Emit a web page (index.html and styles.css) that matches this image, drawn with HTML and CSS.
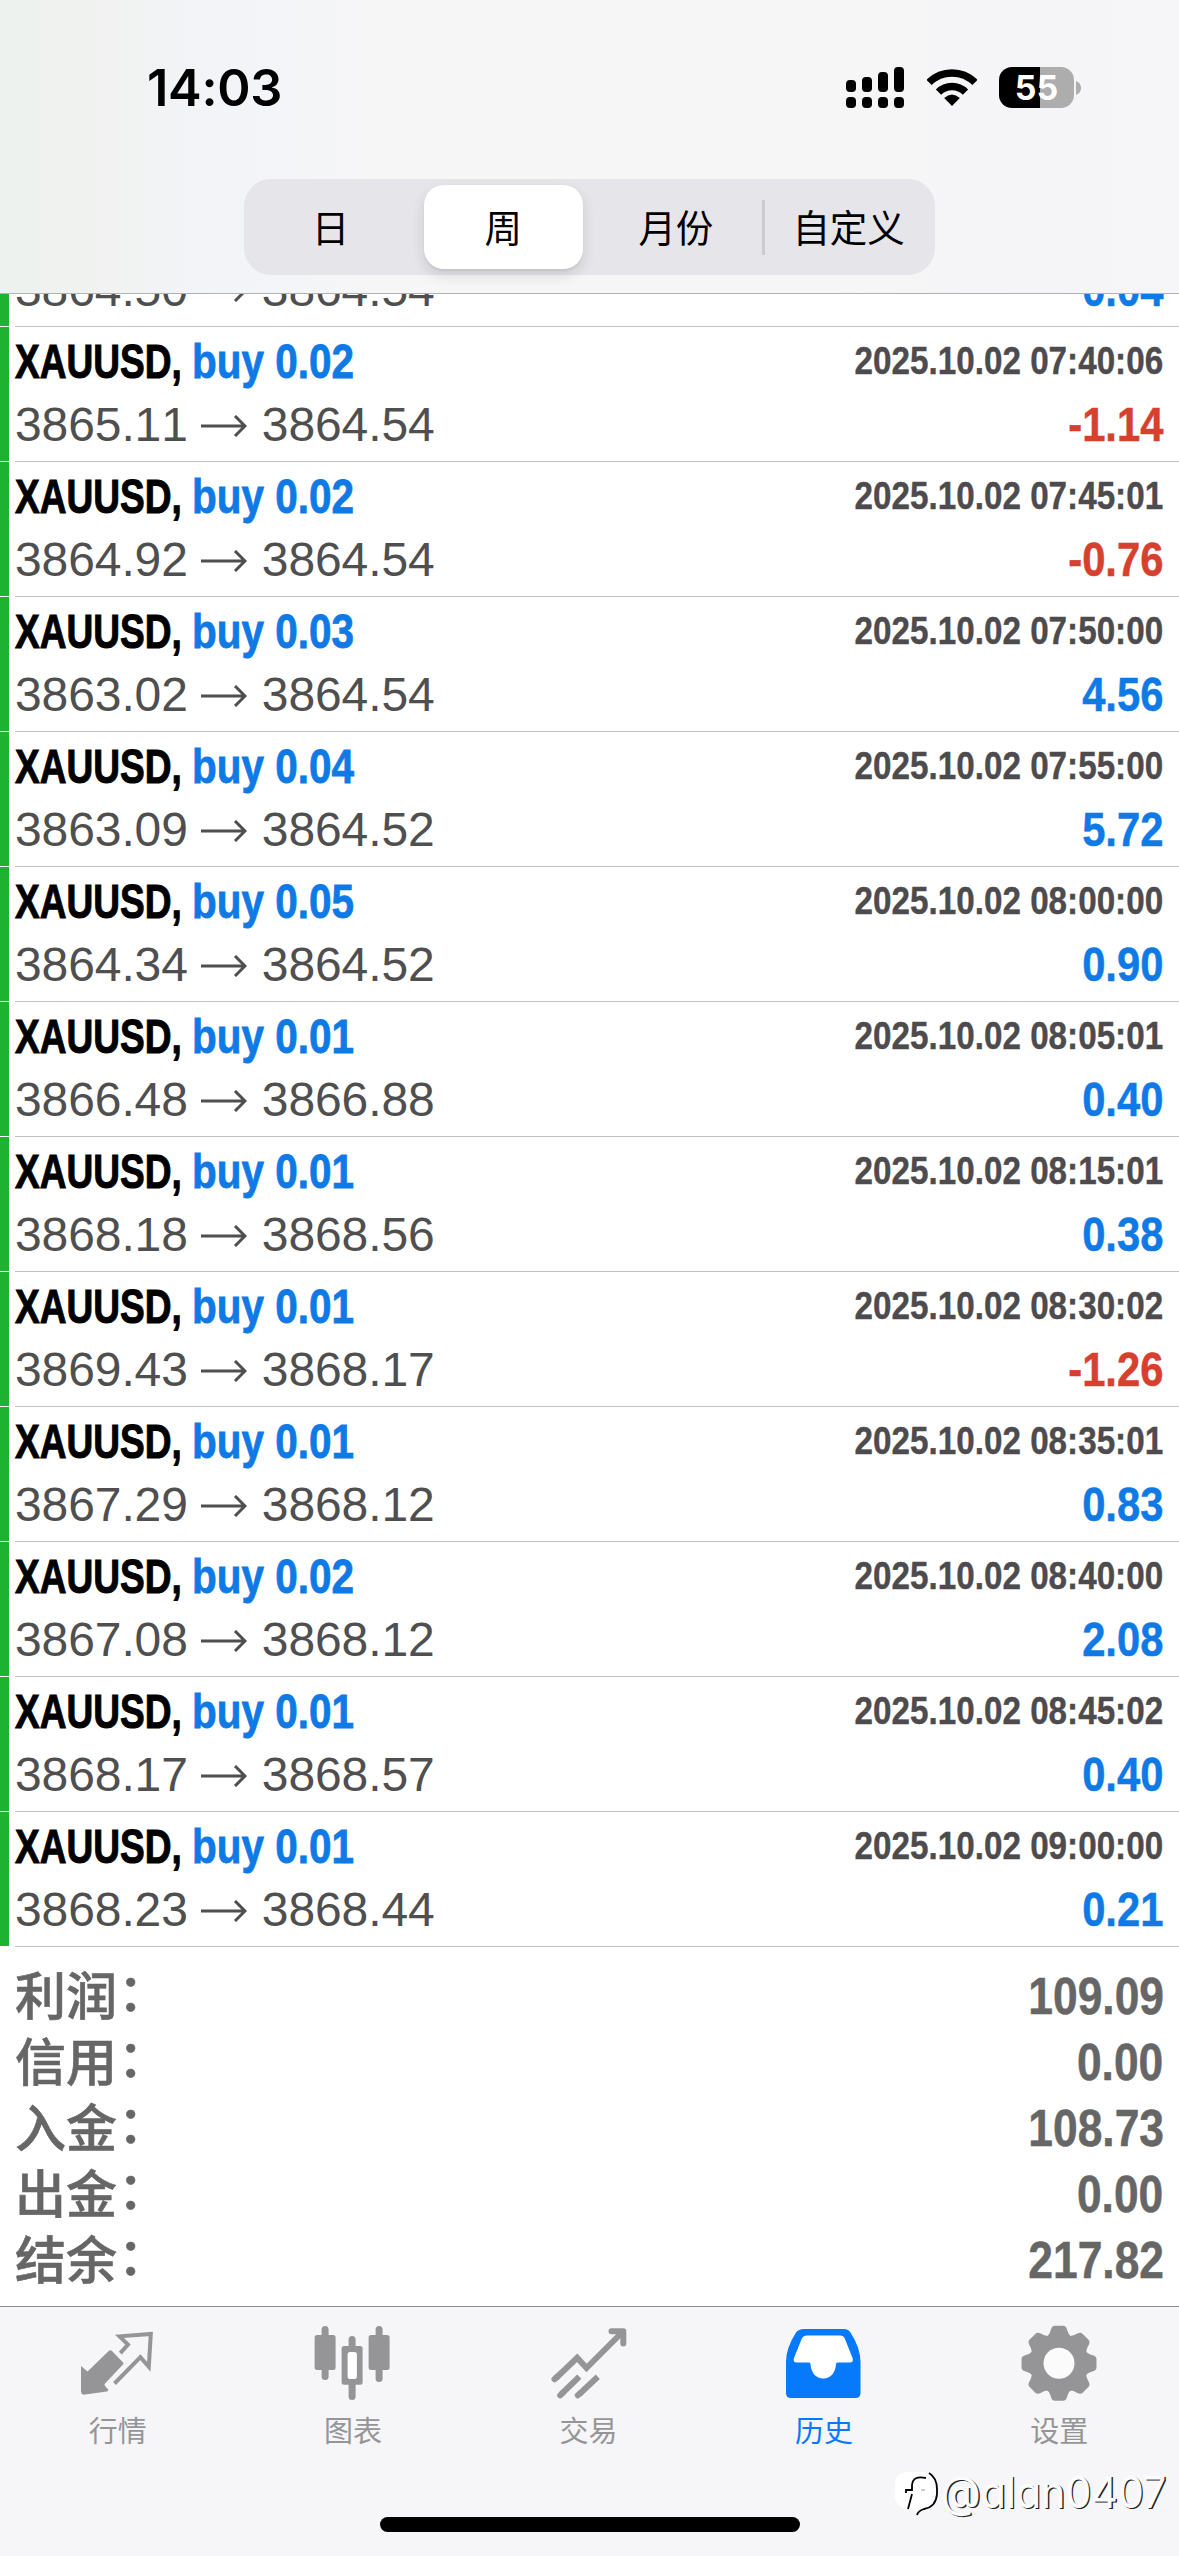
FILE: index.html
```html
<!DOCTYPE html>
<html lang="zh-CN">
<head>
<meta charset="utf-8">
<title>历史</title>
<link rel="stylesheet" href="styles.css">
</head>
<body>
<div class="app">
  <header class="header">
    <div class="status">
      <span class="time">14:03</span>
      <div class="status-icons">
        <svg class="signal" width="58" height="41" viewBox="0 0 58 41">
          <rect x="0" y="13" width="10" height="12" rx="4"/><rect x="16" y="10" width="10" height="15" rx="4"/><rect x="32" y="5" width="10" height="20" rx="4"/><rect x="48" y="0" width="10" height="25" rx="4"/>
          <rect x="0" y="30" width="10" height="11" rx="4"/><rect x="16" y="30" width="10" height="11" rx="4"/><rect x="32" y="30" width="10" height="11" rx="4"/><rect x="48" y="30" width="10" height="11" rx="4"/>
        </svg>
        <svg class="wifi" width="50" height="41" viewBox="0 0 50 41">
          <path d="M2 15.5A32.5 32.5 0 0 1 48 15.5M11.5 25.2A19 19 0 0 1 38.5 25.2" fill="none" stroke="#000" stroke-width="7.4"/>
          <path d="M17.2 31Q25 24 32.8 31L25 39Z"/>
        </svg>
        <div class="battery"><span>55</span></div>
        <svg class="nub" width="5" height="14" viewBox="0 0 5 14"><path d="M0 0Q5 2 5 7T0 14Z" fill="#adadad"/></svg>
      </div>
    </div>
    <nav class="segments">
      <span class="segment">日</span>
      <span class="segment selected">周</span>
      <span class="segment">月份</span>
      <span class="segment divided">自定义</span>
    </nav>
  </header>

  <main class="deals">
    <div class="deal"><i class="mark"></i><div class="body"><div class="line"><b class="symbol">XAUUSD,</b><b class="side">buy 0.01</b><b class="date">2025.10.02 07:35:01</b></div><div class="line"><span class="price">3864.50</span><svg class="arrow" viewBox="0 0 46 22"><path d="M0 11H44M34 1L44 11L34 21"/></svg><span class="price">3864.54</span><b class="profit">0.04</b></div></div></div>
    <div class="deal"><i class="mark"></i><div class="body"><div class="line"><b class="symbol">XAUUSD,</b><b class="side">buy 0.02</b><b class="date">2025.10.02 07:40:06</b></div><div class="line"><span class="price">3865.11</span><svg class="arrow" viewBox="0 0 46 22"><path d="M0 11H44M34 1L44 11L34 21"/></svg><span class="price">3864.54</span><b class="profit loss">-1.14</b></div></div></div>
    <div class="deal"><i class="mark"></i><div class="body"><div class="line"><b class="symbol">XAUUSD,</b><b class="side">buy 0.02</b><b class="date">2025.10.02 07:45:01</b></div><div class="line"><span class="price">3864.92</span><svg class="arrow" viewBox="0 0 46 22"><path d="M0 11H44M34 1L44 11L34 21"/></svg><span class="price">3864.54</span><b class="profit loss">-0.76</b></div></div></div>
    <div class="deal"><i class="mark"></i><div class="body"><div class="line"><b class="symbol">XAUUSD,</b><b class="side">buy 0.03</b><b class="date">2025.10.02 07:50:00</b></div><div class="line"><span class="price">3863.02</span><svg class="arrow" viewBox="0 0 46 22"><path d="M0 11H44M34 1L44 11L34 21"/></svg><span class="price">3864.54</span><b class="profit">4.56</b></div></div></div>
    <div class="deal"><i class="mark"></i><div class="body"><div class="line"><b class="symbol">XAUUSD,</b><b class="side">buy 0.04</b><b class="date">2025.10.02 07:55:00</b></div><div class="line"><span class="price">3863.09</span><svg class="arrow" viewBox="0 0 46 22"><path d="M0 11H44M34 1L44 11L34 21"/></svg><span class="price">3864.52</span><b class="profit">5.72</b></div></div></div>
    <div class="deal"><i class="mark"></i><div class="body"><div class="line"><b class="symbol">XAUUSD,</b><b class="side">buy 0.05</b><b class="date">2025.10.02 08:00:00</b></div><div class="line"><span class="price">3864.34</span><svg class="arrow" viewBox="0 0 46 22"><path d="M0 11H44M34 1L44 11L34 21"/></svg><span class="price">3864.52</span><b class="profit">0.90</b></div></div></div>
    <div class="deal"><i class="mark"></i><div class="body"><div class="line"><b class="symbol">XAUUSD,</b><b class="side">buy 0.01</b><b class="date">2025.10.02 08:05:01</b></div><div class="line"><span class="price">3866.48</span><svg class="arrow" viewBox="0 0 46 22"><path d="M0 11H44M34 1L44 11L34 21"/></svg><span class="price">3866.88</span><b class="profit">0.40</b></div></div></div>
    <div class="deal"><i class="mark"></i><div class="body"><div class="line"><b class="symbol">XAUUSD,</b><b class="side">buy 0.01</b><b class="date">2025.10.02 08:15:01</b></div><div class="line"><span class="price">3868.18</span><svg class="arrow" viewBox="0 0 46 22"><path d="M0 11H44M34 1L44 11L34 21"/></svg><span class="price">3868.56</span><b class="profit">0.38</b></div></div></div>
    <div class="deal"><i class="mark"></i><div class="body"><div class="line"><b class="symbol">XAUUSD,</b><b class="side">buy 0.01</b><b class="date">2025.10.02 08:30:02</b></div><div class="line"><span class="price">3869.43</span><svg class="arrow" viewBox="0 0 46 22"><path d="M0 11H44M34 1L44 11L34 21"/></svg><span class="price">3868.17</span><b class="profit loss">-1.26</b></div></div></div>
    <div class="deal"><i class="mark"></i><div class="body"><div class="line"><b class="symbol">XAUUSD,</b><b class="side">buy 0.01</b><b class="date">2025.10.02 08:35:01</b></div><div class="line"><span class="price">3867.29</span><svg class="arrow" viewBox="0 0 46 22"><path d="M0 11H44M34 1L44 11L34 21"/></svg><span class="price">3868.12</span><b class="profit">0.83</b></div></div></div>
    <div class="deal"><i class="mark"></i><div class="body"><div class="line"><b class="symbol">XAUUSD,</b><b class="side">buy 0.02</b><b class="date">2025.10.02 08:40:00</b></div><div class="line"><span class="price">3867.08</span><svg class="arrow" viewBox="0 0 46 22"><path d="M0 11H44M34 1L44 11L34 21"/></svg><span class="price">3868.12</span><b class="profit">2.08</b></div></div></div>
    <div class="deal"><i class="mark"></i><div class="body"><div class="line"><b class="symbol">XAUUSD,</b><b class="side">buy 0.01</b><b class="date">2025.10.02 08:45:02</b></div><div class="line"><span class="price">3868.17</span><svg class="arrow" viewBox="0 0 46 22"><path d="M0 11H44M34 1L44 11L34 21"/></svg><span class="price">3868.57</span><b class="profit">0.40</b></div></div></div>
    <div class="deal"><i class="mark"></i><div class="body"><div class="line"><b class="symbol">XAUUSD,</b><b class="side">buy 0.01</b><b class="date">2025.10.02 09:00:00</b></div><div class="line"><span class="price">3868.23</span><svg class="arrow" viewBox="0 0 46 22"><path d="M0 11H44M34 1L44 11L34 21"/></svg><span class="price">3868.44</span><b class="profit">0.21</b></div></div></div>
  </main>

  <section class="summary">
    <div class="total"><span class="label">利润<span class="colon">：</span></span><b class="amount">109.09</b></div>
    <div class="total"><span class="label">信用<span class="colon">：</span></span><b class="amount">0.00</b></div>
    <div class="total"><span class="label">入金<span class="colon">：</span></span><b class="amount">108.73</b></div>
    <div class="total"><span class="label">出金<span class="colon">：</span></span><b class="amount">0.00</b></div>
    <div class="total"><span class="label">结余<span class="colon">：</span></span><b class="amount">217.82</b></div>
  </section>

  <footer class="footer">
    <nav class="tabs">
      <a class="tab">
        <svg width="120" height="100" viewBox="-2 0 120 100">
          <path fill="currentColor" d="M21 56L27.5 61.5L49 40.8Q50.5 39.5 52 41L63 52.5Q64 53.5 63 54.6L45 73.5Q44 74.7 45 76L48.3 79.5Q48.5 81 47 81.5L25 84.6Q21 85 21 81Z"/>
          <path fill="none" stroke="currentColor" stroke-width="4" d="M60.3 43.2L68 34.7L59.5 26.3L90.8 24L88.8 56.7L80.4 47.2L54.5 73.5"/>
        </svg>
        <span>行情</span>
      </a>
      <a class="tab">
        <svg width="120" height="100" viewBox="-6.6 0 120 100">
          <g fill="currentColor">
            <rect x="15" y="25" width="21" height="35" rx="2.5"/><rect x="22" y="16" width="7" height="54" rx="3.5"/>
            <rect x="69" y="25" width="21" height="35" rx="2.5"/><rect x="76" y="16" width="7" height="56" rx="3.5"/>
            <rect x="42" y="36" width="21" height="38.7" rx="2.5"/><rect x="49" y="26" width="7" height="64" rx="3.5"/>
          </g>
          <rect x="48" y="42" width="9.3" height="27" rx="2.5" fill="#fff"/>
        </svg>
        <span>图表</span>
      </a>
      <a class="tab">
        <svg width="120" height="100" viewBox="-6.5 0 120 100">
          <path fill="none" stroke="currentColor" stroke-width="6" d="M20 68.5L41.7 47.8L51 58L88 21M26 84L43.8 66.7M44 84L62.3 66.7"/>
          <path fill="none" stroke="currentColor" stroke-width="6" stroke-linecap="round" stroke-linejoin="round" d="M19 69.3L22 66.5M24.7 85.3L27 83M42.3 85.3L45 83M76 21.3H87.8V33.5"/>
        </svg>
        <span>交易</span>
      </a>
      <a class="tab active">
        <svg width="120" height="100" viewBox="-1 0 120 100">
          <path fill="currentColor" d="M39 19H79Q83.500 19 85.500 22.500Q95.500 38 95.500 52V83Q95.500 88 90.500 88H26Q21 88 21 83V52Q21 38 31 22.500Q33.500 19 39 19Z"/>
          <path fill="#fff" d="M42 25.500H75Q78.500 25.500 79.800 28.500L87.500 48Q89 52.500 84.500 52.500H72.500Q71 52.500 71 54C70.500 63 65.500 68.500 58.300 68.500S46 63 45.500 54Q45.500 52.500 44 52.500H32Q27.500 52.500 29 48L36.800 28.500Q38.500 25.500 42 25.500Z"/>
        </svg>
        <span>历史</span>
      </a>
      <a class="tab">
        <svg width="120" height="100" viewBox="0 0 120 100">
          <g transform="translate(60 53.300)" fill="currentColor">
            <g id="teeth"><path d="M-13-26Q-9.500-28-8-34Q-7-37.500-4-37.500H4Q7-37.500 8-34Q9.500-28 13-26V26Q9.500 28 8 34Q7 37.500 4 37.500H-4Q-7 37.500-8 34Q-9.500 28-13 26Z"/></g>
            <use href="#teeth" transform="rotate(45)"/><use href="#teeth" transform="rotate(90)"/><use href="#teeth" transform="rotate(135)"/>
            <circle r="29.500"/>
            <circle r="15.500" fill="#fbfbfc"/>
          </g>
        </svg>
        <span>设置</span>
      </a>
    </nav>
    <div class="home-indicator"></div>
  </footer>

  <div class="watermark">
    <svg width="46" height="50" viewBox="0 0 46 50">
      <path d="M12 2H28Q42 4 42 18V22Q42 36 28 38Q22 40 21 43Q20 39 15 39Q0 38 0 26V14Q0 3 12 2Z" fill="#fff"/>
      <path d="M34 3Q42 8 42 19V24Q41 37 29 39Q23 41 22 45" fill="none" stroke="#000" stroke-width="1.800"/>
      <path d="M31 8Q18 5 17 15V20H11V23M17 24L13 39" fill="none" stroke="#000" stroke-width="1.800"/>
      <path d="M26 20H30" stroke="#999" stroke-width="1"/>
    </svg>
    <span class="handle">@alan0407</span>
  </div>
</div>
</body>
</html>
```
FILE: styles.css
```css
* { box-sizing: border-box; }

body {
  margin: 0;
  background: #fff;
  font-family: "Liberation Sans", "Noto Sans CJK SC", sans-serif;
  font-kerning: none;
}

.app {
  position: relative;
  display: flex;
  flex-direction: column;
  width: 1179px;
  height: 2556px;
  overflow: hidden;
}

/* Header */
.header {
  height: 294px;
  flex: none;
  border-bottom: 1px solid #b2b2b4;
  background: linear-gradient(90deg, #edf2ee 0, #f1f2f1 110px, #f2f4f8 210px, #f6f6f7 380px, #f6f6f6 800px, #f5f5f8 1050px, #f6f5f7 1179px);
}

.status {
  display: flex;
  align-items: center;
  justify-content: space-between;
  height: 175px;
  margin-bottom: 4px;
  padding: 0 98px 0 147px;
}

.time {
  padding-top: 1px;
  font: 600 50.500px/60px Inter, sans-serif;
  letter-spacing: -0.3px;
}

.status-icons { display: flex; align-items: center; }
.wifi { margin-left: 22.500px; }

.battery {
  width: 75px;
  height: 41px;
  margin-left: 22.500px;
  border-radius: 13px;
  background: linear-gradient(90deg, #000 41px, #adadad 41px);
  color: #fff;
  font: 700 34px/41px Inter, sans-serif;
  text-align: center;
}

.nub { margin-left: 2px; }

.segments {
  display: grid;
  grid-template-columns: repeat(4, 1fr);
  width: 691px;
  height: 96px;
  margin: 0 auto;
  padding: 6px 0;
  border-radius: 27px;
  background: #e5e5ea;
}

.segment {
  height: 84px;
  color: #000;
  font: 400 37.500px/81px "Noto Sans CJK SC", sans-serif;
  text-align: center;
}

.segment.selected {
  margin: 0 7px;
  border-radius: 20px;
  background: #fff;
  box-shadow: 0 6px 14px rgba(0, 0, 0, .12), 0 2px 2px rgba(0, 0, 0, .05);
}

.segment.divided {
  background: linear-gradient(#cbcbd0, #cbcbd0) no-repeat 0 50% / 3px 55px;
}

/* Deals */
.deals {
  display: flex;
  flex: none;
  flex-direction: column;
  justify-content: flex-end;
  height: 1653px;
  overflow: hidden;
}

.deal {
  display: flex;
  flex: none;
  gap: 6px;
  height: 135px;
}

.mark {
  width: 9px;
  height: 134px;
  background: #1db330;
}

.body {
  flex: 1;
  padding: 3px 15.500px 0 0;
  border-bottom: 1px solid #bfc0c1;
}

.line {
  display: flex;
  align-items: center;
  height: 63px;
  font-size: 48px;
  line-height: 63px;
  white-space: nowrap;
}

.symbol, .side { transform-origin: 0 50%; }

.symbol {
  width: 176.500px;
  color: #000;
  transform: scaleX(.772);
  -webkit-text-stroke: 1px #000;
}

.side {
  color: #0f7ae5;
  transform: scaleX(.843);
  -webkit-text-stroke: .8px #0f7ae5;
}

.date, .profit {
  margin-left: auto;
  transform-origin: 100% 50%;
}

.date {
  margin-top: -2px;
  color: #4d4b4d;
  font-size: 39px;
  transform: scaleX(.852);
  -webkit-text-stroke: .4px #4d4b4d;
}

.price {
  color: #4f4f50;
  font-size: 48px;
  letter-spacing: -.1px;
}

.arrow {
  width: 46px;
  height: 22px;
  margin: 2px 14.500px 0 13.500px;
  fill: none;
  stroke: #4f4f50;
  stroke-width: 3;
}

.profit {
  color: #0f7ae5;
  transform: scaleX(.87);
  -webkit-text-stroke: .5px currentColor;
}

.profit.loss { color: #d6402f; }

/* Summary */
.summary {
  flex: none;
  height: 359px;
  padding: 17px 15.500px 0 15px;
  color: #666;
}

.total {
  display: flex;
  justify-content: space-between;
  height: 66px;
  line-height: 66px;
}

.label {
  margin-top: -4px;
  font: 500 51px/66px "Noto Sans CJK SC", sans-serif;
  -webkit-text-stroke: .6px #666;
}

/* The colon sits closer to the middle of the characters */
.colon {
  margin-left: 1px;
  line-height: 0;
  vertical-align: 4px;
}

.amount {
  font-size: 51px;
  transform: scaleX(.87);
  transform-origin: 100% 50%;
  -webkit-text-stroke: .5px #666;
}

/* Footer */
.footer {
  flex: none;
  height: 250px;
  border-top: 1px solid #8e8e91;
  background: #f6f6f8;
}

.tabs { display: flex; padding: 3px 2px 0 0; }

.tab {
  display: flex;
  flex: 1;
  flex-direction: column;
  align-items: center;
  color: #959597;
  font: 400 29px/38px "Noto Sans CJK SC", sans-serif;
}

.tab.active { color: #067afb; }

.home-indicator {
  width: 420px;
  height: 15px;
  margin: 69px auto 0;
  border-radius: 8px;
  background: #000;
}

.watermark {
  position: absolute;
  left: 895px;
  top: 2470px;
  display: flex;
  color: #fcfcfc;
  font: 400 44px/44px Inter, sans-serif;
  font-feature-settings: "cv11";
  text-shadow: 1.500px 1px 0 #222;
}

.handle {
  width: 224px;
  white-space: nowrap;
  transform: scaleX(.935);
  transform-origin: 0 50%;
}
```
